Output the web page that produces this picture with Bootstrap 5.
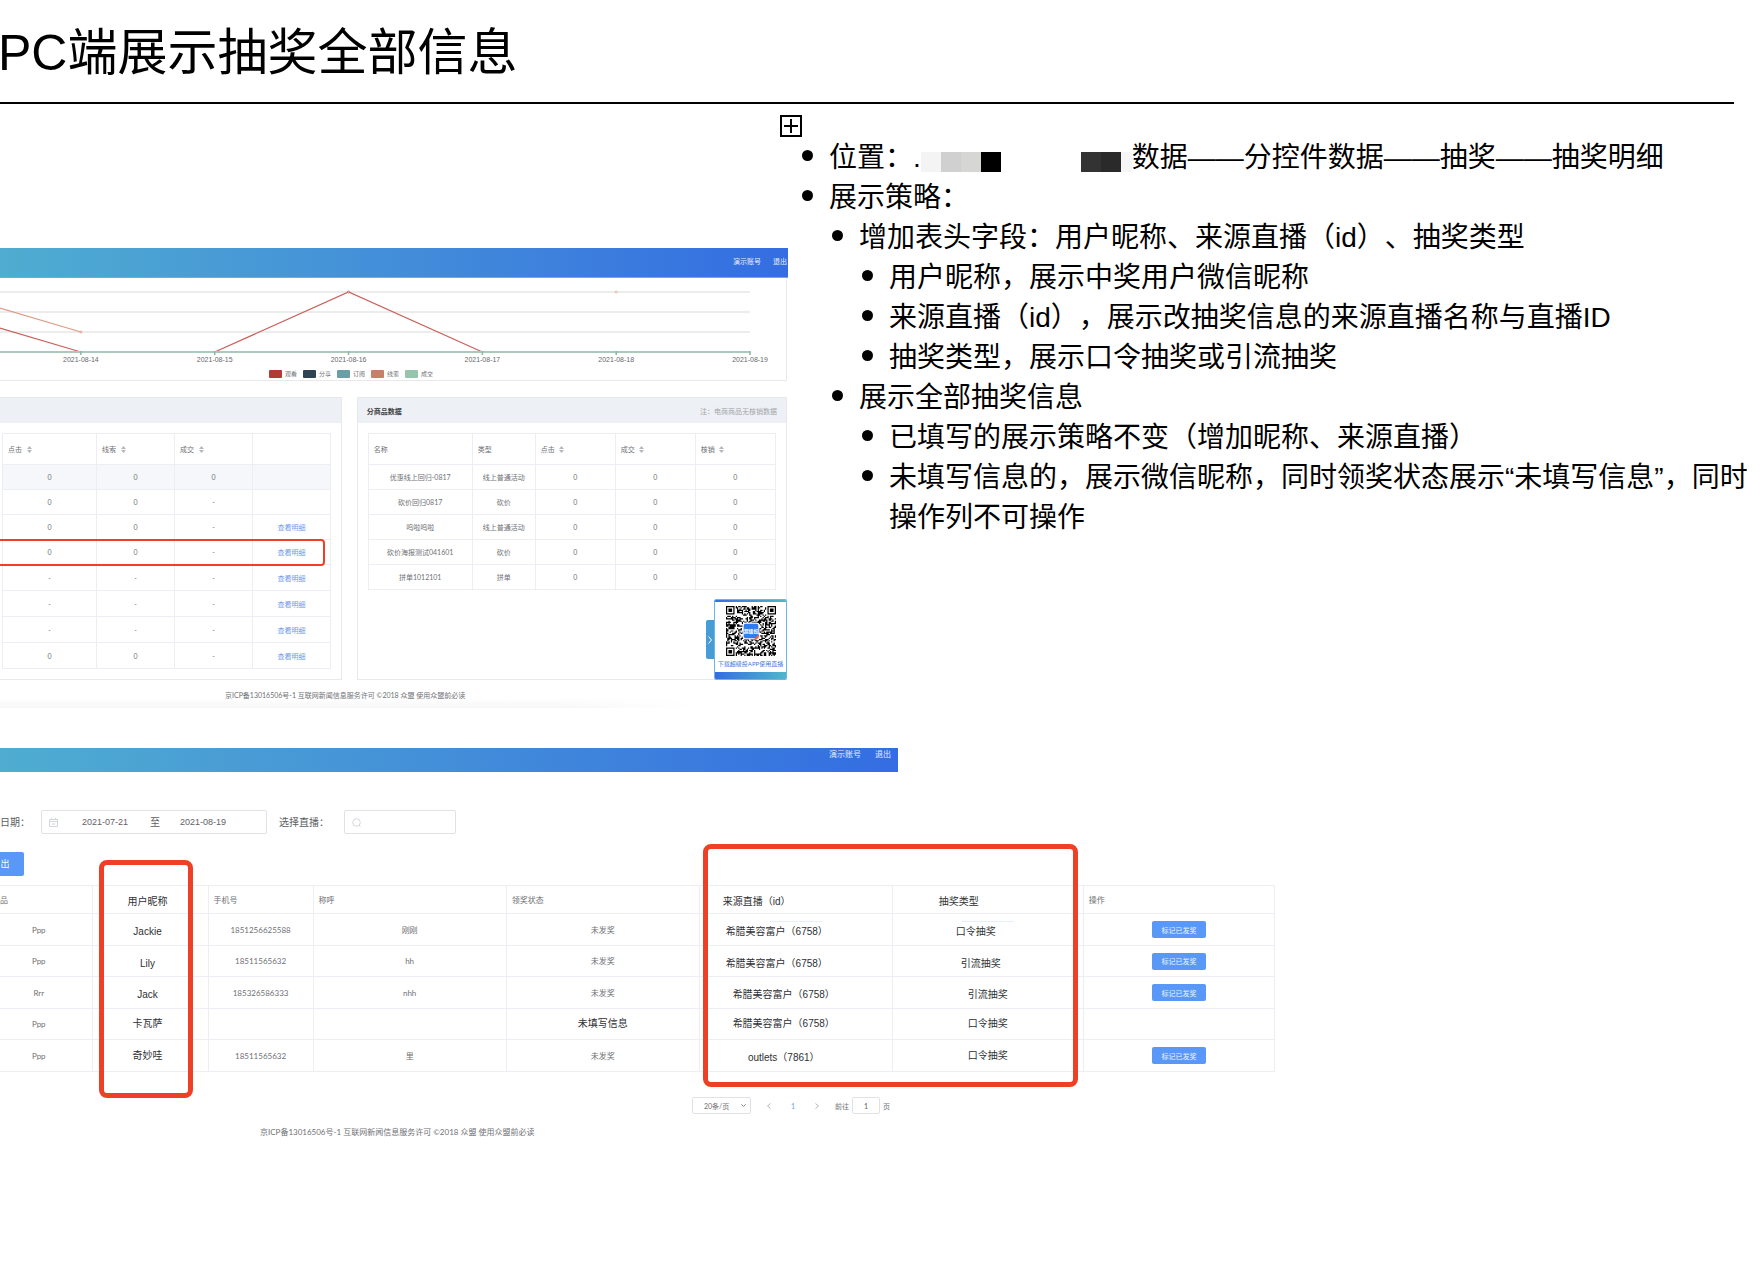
<!DOCTYPE html>
<html lang="zh-CN">
<head>
<meta charset="utf-8">
<meta name="viewport" content="width=device-width, initial-scale=1">
<title>PC端展示抽奖全部信息</title>
<link href="https://cdn.jsdelivr.net/npm/bootstrap@5.3.0/dist/css/bootstrap.min.css" rel="stylesheet">
<style>
  body { font-family: "Liberation Sans", "Noto Sans CJK SC", sans-serif; color: #000; background: #fff; overflow-x: hidden; text-spacing-trim: space-all; }
  .page-title { font-size: 50px; line-height: 60px; margin: 0 0 0 -2px; padding: 23px 0 19px; white-space: nowrap; font-weight: 400; }
  .title-rule { border-top: 2px solid #000; margin-right: 28px; }

  /* notes column */
  .shots-col { flex: 788 1 0; min-width: 0; padding-top: 144px; }
  .notes-col { flex: 982 1 0; min-width: 0; padding-top: 11px; margin-left: -8px; }
  .notes-col svg { display: block; }
  .notes { font-size: 28px; line-height: 40px; padding: 1px 0 0 22px; margin: 0; }
  .notes ul { padding-left: 30px; }
  .note { display: flex; align-items: flex-start; }
  .note::before { content: ""; flex: none; width: 11px; height: 11px; border-radius: 50%; background: #000; margin: 12px 16px 0 0; }
  .mosaic { display: flex; height: 20px; margin-top: 14px; }
  .mosaic i { width: 20px; }
  .m1 { background: #f4f4f4; } .m2 { background: #d0d0d0; } .m3 { background: #d6d6d4; } .m4 { background: #000; }
  .m5 { background: #333; margin-left: 80px; } .m6 { background: #2a2a2a; } .mosaic .m7 { background: #f6f6f6; width: 11px; }

  /* shared look of the two admin screens */
  .admin { font-family: Lato, "Noto Sans CJK SC", sans-serif; color: #6f7175; overflow: hidden; }
  .topbar { background: linear-gradient(90deg, #4fadd0, #438ed9 50%, #346de2); color: #e6eefc; }
  .topbar a, .act { text-decoration: none; color: inherit; }
  .admin .table { --bs-table-color: #6f7175; --bs-table-bg: transparent; --bs-table-border-color: #ebeef5; color: #6f7175; border-color: #ebeef5; table-layout: fixed; width: 100%; margin: 0; }
  .admin .table > :not(caption) > * > * { padding: 0; vertical-align: middle; text-align: center; white-space: nowrap; font-weight: 400; }
  .admin .table > thead > tr > th { text-align: left; padding-left: 5px; }
  .redbox { position: absolute; border: 5px solid #ee4026; border-radius: 8px; pointer-events: none; }

  /* screen one */
  .one { font-size: 7px; line-height: 10px; }
  .one .topbar { height: 30px; gap: 12px; padding: 8px 1px 0; border-bottom: 1px solid #8da3bd; }
  .chart-box { border: solid #e9e9ec; border-width: 0 1px 1px 0; margin: 0 1px 16px 0; height: 103px; }
  .chart-box > svg { display: block; width: 100%; height: 88px; }
  .legend { display: flex; gap: 6px; font-size: 6px; line-height: 8px; padding-left: 269px; }
  .legend span { display: flex; gap: 3px; }
  .legend i { width: 13px; height: 8px; border-radius: 1px; }
  .k1 { background: #b33a35; } .k2 { background: #2f4554; } .k3 { background: #6a9fa5; } .k4 { background: #ca8068; } .k5 { background: #96c4ac; }
  .panels { display: flex; gap: 15px; margin-right: 1px; position: relative; }
  .panel { border: 1px solid #e6e8ec; height: 283px; min-width: 0; }
  .panel-l { flex: 342 1 0; border-left: 0; } .panel-r { flex: 430 1 0; }
  .panel-top { background: #edf0f5; height: 25px; padding: 0 9px; display: flex; justify-content: space-between; align-items: center; color: #a3a5a9; }
  .panel-top b { color: #3d3f43; }
  .panel-l .pad { padding: 10px 11px 0 2px; } .panel-r .pad { padding: 10px 11px 0 10px; }
  .one thead tr { height: 31px; } .one tbody tr { height: 25px; }
  .panel-l tbody tr:nth-child(n+5) { height: 26px; }
  .panel-l tbody tr:first-child { background: #f5f7fa; }
  .panel-l col:nth-child(1) { width: 94px; } .panel-l col:nth-child(n+2) { width: 78px; }
  .panel-r col:nth-child(1) { width: 104px; } .panel-r col:nth-child(2) { width: 63px; } .panel-r col:nth-child(n+3) { width: 80px; }
  .sort { width: 5px; height: 7px; margin-left: 3px; vertical-align: -1px; fill: #b4b7be; }
  .act { color: #6d9aec; }
  .one .redbox { border-width: 2px; border-radius: 4px; left: -6px; top: 142px; width: 331px; height: 27px; }
  .qr-pop { position: absolute; right: 0; bottom: 0; width: 73px; height: 81px; border: 1px solid #6cb3e6; border-radius: 2px; background: #fff; color: #3f78e0; text-align: center; overflow: hidden; white-space: nowrap; font-size: 6px; }
  .qr-pop::before { content: ""; display: block; height: 2px; background: linear-gradient(90deg, #346de2, #50b6cb); }
  .qr-pop::after { content: ""; display: block; height: 7px; background: linear-gradient(90deg, #346de2, #50b6cb); margin-top: 3px; }
  .qr-pop svg { display: block; width: 50px; height: 50px; margin: 4px auto 3px; }
  .qr-tab { position: absolute; right: 73px; bottom: 21px; width: 8px; height: 39px; padding: 0; border: 0; border-radius: 2px 0 0 2px; background: #479cd6; display: flex; align-items: center; justify-content: center; }
  .one footer { padding: 10px 0 0 225px; font-size: 7px; height: 28px; background: linear-gradient(90deg, transparent 70%, #fff 88%), linear-gradient(#fff 65%, #f6f6f6); }

  /* screen two */
  .two-wrap { flex: 1275 1 0; min-width: 0; }
  .two { font-size: 8px; line-height: 12px; position: relative; }
  .two-main { width: 70.43%; }
  .two .topbar { height: 24px; padding-right: 7px; gap: 14px; }
  .filters { display: flex; padding-top: 38px; font-size: 10px; color: #5c5e62; line-height: 24px; }
  .filters label { white-space: nowrap; }
  .field { border: 1px solid #dfe2e8; border-radius: 2px; height: 24px; display: flex; align-items: center; }
  .field input, .jump { border: 0; padding: 0; background: none; color: #5f6165; min-width: 0; font-size: 9px; outline: 0; }
  .field input { width: 48px; }
  .range { width: 226px; padding-left: 7px; margin-left: 11px; }
  .seek { width: 112px; padding-left: 7px; margin-left: 15px; }
  .filters .from-label { margin-left: 0; }
  .filters input { font-family: "Liberation Sans", sans-serif; }
  .export { margin-top: 18px; height: 24px; width: 24px; font-size: 9px; line-height: 22px; padding: 0 14px 0 0; border: 0; border-radius: 0 2px 2px 0; background: #5998f7; color: #fff; display: block; }
  .two .table { margin-top: 9px; }
  .two .table > :not(caption) > * > :first-child { border-left: 0; }
  .two thead tr { height: 28px; }
  .two tbody tr:nth-child(odd) { height: 32px; } .two tbody tr:nth-child(even) { height: 31px; }
  .two col:nth-child(1) { width: 92px; } .two col:nth-child(2) { width: 116px; } .two col:nth-child(3) { width: 105px; }
  .two col:nth-child(n+4) { width: 193px; } .two col:nth-child(n+7) { width: 191px; }
  .two .table > :not(caption) > * > .ink { font-family: "Liberation Sans", "Noto Sans CJK SC", sans-serif; color: #2e3033; font-size: 10px; }
  .two .table > :not(caption) > * > .low { padding-top: 5px; }
  .two .table > :not(caption) > * > :nth-child(2) { padding-right: 5px; }
  .two .table > :not(caption) > * > .sh-a { padding-right: 38px; }
  .two .table > :not(caption) > * > .sh-b { padding-right: 24px; }
  .two .table > :not(caption) > * > .sh-c { padding-right: 14px; }
  .two .table > thead > tr > .h-mid { text-align: center; padding-left: 0; }
  .two .table > thead > tr > .h-src { padding-left: 23px; }
  .two .table > thead > tr > .h-typ { padding-left: 46px; }
  .two .table > thead > tr > .h-none { padding-left: 0; }
  .trace { position: absolute; top: 7px; left: 0; right: 0; margin: 0 auto; width: 52px; height: 1px; background: #e4effc; }
  .done { font-size: 7px; line-height: 16px; height: 17px; width: 54px; padding: 0; border: 0; border-radius: 2px; background: #5998f7; color: #eef4ff; display: inline-block; vertical-align: middle; }
  .box-a { left: 7.76%; width: 7.37%; top: 88px; height: 238px; }
  .box-b { left: 55.14%; width: 29.41%; top: 72px; height: 243px; }
  .pager { display: flex; justify-content: flex-end; align-items: center; padding: 25px 8px 0 0; font-size: 7px; line-height: 14px; }
  .pager .form-select { width: 59px; height: 17px; font-size: 7px; line-height: 14px; padding: 0 14px 0 11px; border: 1px solid #dfe2e8; border-radius: 2px; color: #6f7175; background-color: #fff; background-size: 5px 5px; background-position: right 4px center; }
  .pager button { border: 0; background: none; padding: 0; line-height: 10px; display: flex; }
  .jump { width: 28px; height: 17px; border: 1px solid #dfe2e8; border-radius: 2px; text-align: center; font-size: 7px; margin: 0 3px; }
  .pager .jump { border: 1px solid #dfe2e8; }
  .two footer { padding: 12px 0 0 260px; }
  .gap-right { flex: 487 1 0; }
</style>
<script src="https://cdn.jsdelivr.net/npm/bootstrap@5.3.0/dist/js/bootstrap.bundle.min.js"></script>
</head>
<body>
<header>
  <h1 class="page-title">PC端展示抽奖全部信息</h1>
  <div class="title-rule"></div>
</header>

<main>
<div class="d-flex align-items-start">
  <div class="shots-col">
    <section class="admin one">
      <nav class="topbar d-flex justify-content-end"><a href="#">演示账号</a><a href="#">退出</a></nav>
      <div class="chart-box">
        <svg viewBox="0 0 787 88" preserveAspectRatio="none" role="img" aria-label="趋势图">
          <g stroke="#e6e6e6" stroke-width="1.5"><path d="M0 14H751M0 34H751M0 54H751"/></g>
          <g fill="none" stroke-width="1.2">
            <path d="M0 30L81 54" stroke="#dc9d86"/>
            <path d="M0 50L81 74M215 74L349 14L483 74" stroke="#c9605a"/>
          </g>
          <path d="M0 74H751" stroke="#aacbbc" stroke-width="2"/>
          <path d="M81 73v4M215 73v4M349 73v4M483 73v4M617 73v4M751 73v4" stroke="#8fb3a4" stroke-width="1.5"/>
          <g fill="#fff" stroke-width="1"><circle cx="81" cy="54" r="1" stroke="#dc9d86"/><circle cx="349" cy="14" r="1" stroke="#c9605a"/><circle cx="617" cy="14" r="1" stroke="#e6b3ab"/></g>
          <g font-family="Liberation Sans, sans-serif" font-size="7" fill="#66686c" text-anchor="middle">
            <text x="81" y="84">2021-08-14</text><text x="215" y="84">2021-08-15</text><text x="349" y="84">2021-08-16</text>
            <text x="483" y="84">2021-08-17</text><text x="617" y="84">2021-08-18</text><text x="751" y="84">2021-08-19</text>
          </g>
        </svg>
        <div class="legend mt-1">
          <span><i class="k1"></i>观看</span><span><i class="k2"></i>分享</span><span><i class="k3"></i>订阅</span><span><i class="k4"></i>线索</span><span><i class="k5"></i>成交</span>
        </div>
      </div>

      <div class="panels">
        <div class="panel panel-l">
          <div class="panel-top"></div>
          <div class="pad">
            <table class="table table-bordered">
              <colgroup><col><col><col><col></colgroup>
              <thead><tr>
                <th>点击 <svg class="sort" viewBox="0 0 5 7"><path d="M0 3L2.5 0L5 3ZM0 4L2.5 7L5 4Z"/></svg></th>
                <th>线索 <svg class="sort" viewBox="0 0 5 7"><path d="M0 3L2.5 0L5 3ZM0 4L2.5 7L5 4Z"/></svg></th>
                <th>成交 <svg class="sort" viewBox="0 0 5 7"><path d="M0 3L2.5 0L5 3ZM0 4L2.5 7L5 4Z"/></svg></th>
                <th></th>
              </tr></thead>
              <tbody>
                <tr><td>0</td><td>0</td><td>0</td><td></td></tr>
                <tr><td>0</td><td>0</td><td>-</td><td></td></tr>
                <tr><td>0</td><td>0</td><td>-</td><td><a class="act" href="#">查看明细</a></td></tr>
                <tr><td>0</td><td>0</td><td>-</td><td><a class="act" href="#">查看明细</a></td></tr>
                <tr><td>-</td><td>-</td><td>-</td><td><a class="act" href="#">查看明细</a></td></tr>
                <tr><td>-</td><td>-</td><td>-</td><td><a class="act" href="#">查看明细</a></td></tr>
                <tr><td>-</td><td>-</td><td>-</td><td><a class="act" href="#">查看明细</a></td></tr>
                <tr><td>0</td><td>0</td><td>-</td><td><a class="act" href="#">查看明细</a></td></tr>
              </tbody>
            </table>
          </div>
        </div>
        <div class="panel panel-r">
          <div class="panel-top"><b>分商品数据</b><span>注：电商商品无核销数据</span></div>
          <div class="pad">
            <table class="table table-bordered">
              <colgroup><col><col><col><col><col></colgroup>
              <thead><tr>
                <th>名称</th><th>类型</th>
                <th>点击 <svg class="sort" viewBox="0 0 5 7"><path d="M0 3L2.5 0L5 3ZM0 4L2.5 7L5 4Z"/></svg></th>
                <th>成交 <svg class="sort" viewBox="0 0 5 7"><path d="M0 3L2.5 0L5 3ZM0 4L2.5 7L5 4Z"/></svg></th>
                <th>核销 <svg class="sort" viewBox="0 0 5 7"><path d="M0 3L2.5 0L5 3ZM0 4L2.5 7L5 4Z"/></svg></th>
              </tr></thead>
              <tbody>
                <tr><td>优惠线上回归-0817</td><td>线上普通活动</td><td>0</td><td>0</td><td>0</td></tr>
                <tr><td>砍价回归0817</td><td>砍价</td><td>0</td><td>0</td><td>0</td></tr>
                <tr><td>呜啦呜啦</td><td>线上普通活动</td><td>0</td><td>0</td><td>0</td></tr>
                <tr><td>砍价海报测试041601</td><td>砍价</td><td>0</td><td>0</td><td>0</td></tr>
                <tr><td>拼单1012101</td><td>拼单</td><td>0</td><td>0</td><td>0</td></tr>
              </tbody>
            </table>
          </div>
        </div>
        <div class="redbox"></div>
        <button class="qr-tab" type="button" aria-label="收起"><svg width="4" height="8" viewBox="0 0 4 8"><path d="M.5 .5L3.5 4L.5 7.5" fill="none" stroke="#fff"/></svg></button>
        <div class="qr-pop">
          <svg viewBox="0 0 41 41" id="qr">
            <path id="qr-dots" fill="#000"/>
            <rect x="14" y="14" width="13" height="13" rx="2" fill="#2f7cf0" stroke="#fff"/>
            <path d="M23 27L27 23V25Q27 27 25 27Z" fill="#e8604c"/>
            <text x="20.5" y="22" font-size="4" font-weight="700" fill="#fff" text-anchor="middle">超级投</text>
          </svg>
          下载超级投APP使用直播
        </div>
      </div>
      <footer>京ICP备13016506号-1 互联网新闻信息服务许可 ©2018 众盟 使用众盟前必读</footer>
    </section>
  </div>

  <section class="notes-col">
    <svg width="22" height="22" viewBox="0 0 22 22"><path d="M1 1H21V21H1ZM4 11H18M11 4V18" fill="none" stroke="#000" stroke-width="2"/></svg>
    <ul class="notes list-unstyled">
      <li><div class="note"><span>位置：</span><span>.</span><span class="mosaic"><i class="m1"></i><i class="m2"></i><i class="m3"></i><i class="m4"></i><i class="m5"></i><i class="m6"></i><i class="m7"></i></span><span>数据——分控件数据——抽奖——抽奖明细</span></div></li>
      <li><div class="note">展示策略：</div>
        <ul class="list-unstyled">
          <li><div class="note">增加表头字段：用户昵称、来源直播（id）、抽奖类型</div>
            <ul class="list-unstyled">
              <li class="note">用户昵称，展示中奖用户微信昵称</li>
              <li class="note">来源直播（id），展示改抽奖信息的来源直播名称与直播ID</li>
              <li class="note">抽奖类型，展示口令抽奖或引流抽奖</li>
            </ul>
          </li>
          <li><div class="note">展示全部抽奖信息</div>
            <ul class="list-unstyled">
              <li class="note">已填写的展示策略不变（增加昵称、来源直播）</li>
              <li class="note"><span>未填写信息的，展示微信昵称，同时领奖状态展示“未填写信息”，同时<br>操作列不可操作</span></li>
            </ul>
          </li>
        </ul>
      </li>
    </ul>
  </section>
</div>

<div class="d-flex pt-4 mt-3">
  <section class="admin two-wrap">
    <div class="two-main"><div class="two"><nav class="topbar d-flex justify-content-end"><a href="#">演示账号</a><a href="#">退出</a></nav></div></div>
    <div class="two">
      <form class="filters">
        <label for="from" class="from-label">日期：</label>
        <div class="field range">
          <svg width="9" height="9" viewBox="0 0 9 9" fill="none" stroke="#d3d6dc" class="me-4"><path d="M.5 1.5H8.5V8.5H.5ZM.5 3.5H8.5M2.5 0V2M6.5 0V2M2.5 6H6.5"/></svg>
          <input id="from" value="2021-07-21"><span class="px-3 mx-1">至</span><input aria-label="结束日期" value="2021-08-19">
        </div>
        <label for="live" class="ms-2 ps-1">选择直播：</label>
        <div class="field seek flex-shrink-0">
          <svg width="9" height="9" viewBox="0 0 9 9" fill="none" stroke="#d3d6dc"><circle cx="4.5" cy="4.5" r="3.8"/><path d="M7 7L8.5 8.5"/></svg>
          <input id="live">
        </div>
      </form>
      <button class="export" type="button">出</button>
      <table class="table table-bordered">
        <colgroup><col><col><col><col><col><col><col><col></colgroup>
        <thead><tr><th class="h-none">品</th><th class="ink low h-mid">用户昵称</th><th>手机号</th><th>称呼</th><th>领奖状态</th><th class="ink low h-src">来源直播（id）</th><th class="ink low h-typ">抽奖类型</th><th>操作</th></tr></thead>
        <tbody>
          <tr><td class="sh-c">Ppp</td><td class="ink low">Jackie</td><td>1851256625588</td><td>刚刚</td><td>未发奖</td><td class="ink low sh-a position-relative"><i class="trace"></i>希腊美容富户（6758）</td><td class="ink low sh-b position-relative"><i class="trace"></i>口令抽奖</td><td><button class="done" type="button">标记已发奖</button></td></tr>
          <tr><td class="sh-c">Ppp</td><td class="ink low">Lily</td><td>18511565632</td><td>hh</td><td>未发奖</td><td class="ink low sh-a">希腊美容富户（6758）</td><td class="ink low sh-c">引流抽奖</td><td><button class="done" type="button">标记已发奖</button></td></tr>
          <tr><td class="sh-c">Rrr</td><td class="ink low">Jack</td><td>185326586333</td><td>nhh</td><td>未发奖</td><td class="ink low sh-b">希腊美容富户（6758）</td><td class="ink low">引流抽奖</td><td><button class="done" type="button">标记已发奖</button></td></tr>
          <tr><td class="sh-c">Ppp</td><td class="ink">卡瓦萨</td><td></td><td></td><td class="ink">未填写信息</td><td class="ink sh-b">希腊美容富户（6758）</td><td class="ink">口令抽奖</td><td></td></tr>
          <tr><td class="sh-c">Ppp</td><td class="ink">奇妙哇</td><td>18511565632</td><td>里</td><td>未发奖</td><td class="ink low sh-b">outlets（7861）</td><td class="ink">口令抽奖</td><td><button class="done" type="button">标记已发奖</button></td></tr>
        </tbody>
      </table>
      <div class="redbox box-a"></div>
      <div class="redbox box-b"></div>
      <div class="two-main">
        <div class="pager">
          <select class="form-select" aria-label="每页条数"><option>20条/页</option></select>
          <button type="button" class="ms-3" aria-label="上一页"><svg width="4" height="6" viewBox="0 0 4 6"><path d="M3.5 .5L.5 3L3.5 5.5" fill="none" stroke="#b4b7be"/></svg></button>
          <a href="#" class="act px-3 mx-1">1</a>
          <button type="button" class="me-3" aria-label="下一页"><svg width="4" height="6" viewBox="0 0 4 6"><path d="M.5 .5L3.5 3L.5 5.5" fill="none" stroke="#b4b7be"/></svg></button>
          <label for="jump">前往</label><input id="jump" class="jump" value="1">页
        </div>
      </div>
      <footer>京ICP备13016506号-1 互联网新闻信息服务许可 ©2018 众盟 使用众盟前必读</footer>
    </div>
  </section>
  <div class="gap-right"></div>
</div>
</main>

<script>
  // Fill the QR modules: three finder squares and a fixed pseudo-random field.
  (function () {
    var n = 41, seed = 7, d = '';
    function finder(x, y) {
      var cx = x < 9 ? x : (x > n - 10 ? n - 1 - x : -1), cy = y < 9 ? y : (y > n - 10 ? n - 1 - y : -1);
      if (cx < 0 || cy < 0 || (x > n - 10 && y > n - 10) || cx > 7 || cy > 7) return null;
      var r = Math.max(Math.abs(cx - 3), Math.abs(cy - 3));
      return r === 3 || r < 2;
    }
    for (var y = 0; y < n; y++) for (var x = 0; x < n; x++) {
      seed = (seed * 1103515245 + 12345) % 2147483648;
      var f = finder(x, y), on = f === null ? seed / 2147483648 < 0.5 : f;
      if (on) d += 'M' + x + ' ' + y + 'h1v1h-1z';
    }
    document.getElementById('qr-dots').setAttribute('d', d);
  })();
</script>
</body>
</html>
